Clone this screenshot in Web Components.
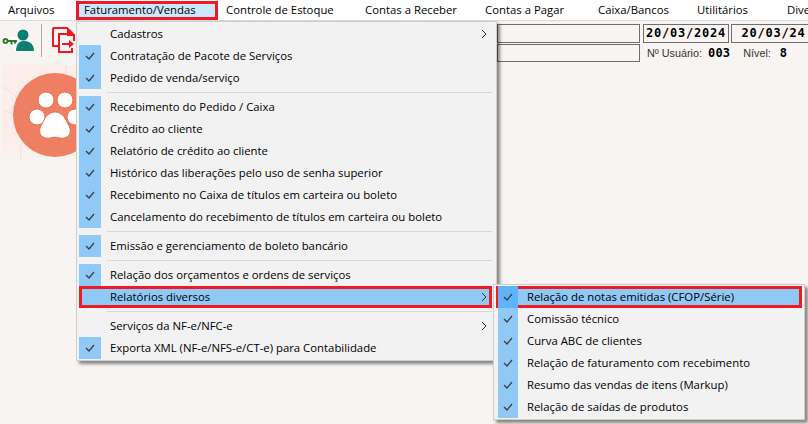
<!DOCTYPE html>
<html lang="pt-BR">
<head>
<meta charset="utf-8">
<style>
  html, body { margin: 0; padding: 0; height: 100%; overflow: hidden; background: #f7f4f1; }
  body { font: 11.35px "Open Sans", sans-serif; color: #000; width: 808px; height: 424px; position: relative; }
</style>
</head>
<body>
<erp-menubar>
  <span>Arquivos</span><span class="x">Faturamento/Vendas</span><span>Controle de Estoque</span><span>Contas a Receber</span><span>Contas a Pagar</span><span>Caixa/Bancos</span><span>Utilitários</span><span>Diversos</span>
</erp-menubar>
<erp-toolbar></erp-toolbar>
<erp-menu id="m1"></erp-menu>
<erp-menu id="m2"></erp-menu>

<script>
const menuBarTemplate = document.createElement('template');
menuBarTemplate.innerHTML = `
  <style>
    :host { display: block; height: 20px; background: #fff; border-bottom: 1px solid #d9d9d9; overflow: hidden; }
    .bar { display: grid; grid-template-columns: 76px 142px 139px 120px 113px 99px 90px 60px; height: 20px; white-space: nowrap; }
    ::slotted(span) { padding: 2px 0 0 8px; line-height: 15px; }
    ::slotted(.x) { background: #cce8ff; box-shadow: inset 0 0 0 3px #ed1c24; margin-top: 1px; height: 19px; padding-top: 1px; box-sizing: border-box; }
  </style>
  <div class="bar"><slot></slot></div>
`;
class ErpMenubar extends HTMLElement {
  constructor() {
    super();
    this.attachShadow({ mode: 'open' });
    this.shadowRoot.appendChild(menuBarTemplate.content.cloneNode(true));
  }
}
customElements.define('erp-menubar', ErpMenubar);

const toolbarTemplate = document.createElement('template');
toolbarTemplate.innerHTML = `
  <style>
    :host { display: grid; grid-template-columns: 497px 1fr; height: 403px; }
    .left { display: flex; flex-direction: column; }
    .icons { display: flex; align-items: flex-start; height: 44px; padding: 3px 0 0 2px; box-sizing: border-box; }
    .sep { width: 1px; height: 33px; margin: 0 0 0 7px; background: #a9a9a9; }
    .red { margin: 3px 0 0 10px; }
    .logo { display: block; margin-left: 2px; }
    .fields { display: grid; grid-template-columns: 143px 85px 85px; grid-template-rows: 19px 18px; column-gap: 3px; row-gap: 1px; padding-top: 3px; width: 311px; overflow: hidden; align-content: start; }
    .fields > :nth-child(2) { margin-right: -1px; }
    .box { border: 1px solid #6e6e6e; box-sizing: border-box; }
    .date { font: bold 12px "DejaVu Sans Mono", monospace; letter-spacing: 0.8px; text-align: center; line-height: 17px; white-space: nowrap; }
    .user { grid-column: 2 / 4; display: flex; align-items: center; white-space: nowrap; font: 10.8px "Liberation Sans", sans-serif; color: #333; padding-left: 4px; }
    .user b { font: bold 12px "DejaVu Sans Mono", monospace; color: #000; letter-spacing: 0.2px; }
    .user b:first-of-type { margin: 0 13px 0 6px; }
    .user b:last-of-type { margin-left: 9px; }
  </style>
  <div class="left">
    <div class="icons">
      <svg width="32" height="30" viewBox="0 0 32 30" style="margin-top:3px">
        <path d="M20.500 2a6 6 0 0 1 6 6c0 2-1 3.500-2 4.500 5 1 8 4 8 9.500v1H12v-1c0-5 3-8.500 8-9.500-1-1-2-2.500-2-4.500a6 6 0 0 1 2.500-6z" fill="#fff"/>
        <circle cx="21" cy="8" r="5.500" fill="#0a7f72"/>
        <path d="M14 24c0-5.500 2.500-10 7-10s11 1 11 10z" fill="#0a7f72"/>
        <rect x="0" y="10" width="15" height="9" rx="2" fill="#fff"/>
        <circle cx="3.500" cy="14" r="2" fill="none" stroke="#2d7f2d" stroke-width="2"/>
        <path d="M6 14h9M9.500 14.500v3M13 14.500v2" stroke="#2d7f2d" stroke-width="2" fill="none"/>
      </svg>
      <div class="sep"></div>
      <svg class="red" width="24" height="28" viewBox="0 0 24 28">
        <path d="M6 19H1V2a1 1 0 0 1 1-1h13l7 7v6" fill="none" stroke="#f01820" stroke-width="2"/>
        <path d="M15 1l8 8h-8z" fill="#f01820"/>
        <path d="M15 7H7v18h13v-4" fill="none" stroke="#f01820" stroke-width="2"/>
        <path d="M10 16h7v-3l5 4-5 4v-3h-7z" fill="#f01820"/>
      </svg>
    </div>
    <svg class="logo" width="75" height="96" viewBox="0 0 75 96">
      <defs><linearGradient id="fade" x1="0" y1="0" x2="0" y2="1"><stop offset="0.800" stop-color="#fdeeea"/><stop offset="1" stop-color="#f7f4f1"/></linearGradient></defs>
      <rect width="75" height="96" fill="url(#fade)"/>
      <path d="M0 22c5 2 10 5 14 10M0 45c8 2 15 6 20 12M64 0c1 3 0 6-1 10M22 72c-3 8-4 14-3 24" fill="none" stroke="#efe0dc"/>
      <circle cx="53" cy="50" r="42" fill="#ee7f63"/>
      <g fill="#fff" stroke="#e96f52">
        <circle cx="44" cy="35" r="8"/><circle cx="63" cy="35" r="8"/>
        <circle cx="35" cy="52" r="8"/><circle cx="73" cy="52" r="8"/>
        <path d="M53 47c-6 0-10 5-12 10-2 4-4 6-3 11 1 4 6 6 10 5 3-1 7-1 10 0 4 1 9-1 10-5 1-5-1-7-3-11-2-5-6-10-12-10z"/>
      </g>
    </svg>
  </div>
  <div class="fields">
    <div class="box"></div>
    <div class="box date">20/03/2024</div>
    <div class="box date">20/03/24</div>
    <div class="box"></div>
    <div class="user">Nº Usuário: <b>003</b> Nível: <b>8</b></div>
  </div>
`;
class ErpToolbar extends HTMLElement {
  constructor() {
    super();
    this.attachShadow({ mode: 'open' });
    this.shadowRoot.appendChild(toolbarTemplate.content.cloneNode(true));
  }
}
customElements.define('erp-toolbar', ErpToolbar);

const menuTemplate = document.createElement('template');
menuTemplate.innerHTML = `
  <style>
    :host { display: block; position: absolute; box-sizing: border-box; background: #f2f2f2; border: 1px solid #cfcfcf; padding: 1px var(--pad-right, 2px) 1px 2px; box-shadow: 3px 3px 3px rgba(0,0,0,.45); }
    .row { display: flex; align-items: center; height: 22px; position: relative; white-space: nowrap; }
    .row span { position: relative; top: -1px; }
    .chk { width: var(--chk, 22px); margin-left: var(--chk-left, 0); height: 22px; flex: none; display: flex; align-items: center; justify-content: center; margin-right: 9px; }
    .chk.on { background: #90c8f6; }
    .row.hi { background: #90c8f6; }
    .row.hi .chk.on { background: #5fb3f8; }
    .row.box { box-shadow: inset 0 0 0 3px #ed1c24; }
    .arrow { position: absolute; right: 5px; top: 6px; }
    .sep { height: 1px; background: #d7d7d7; margin: 3px 0 3px 28px; }
  </style>
  <div id="list"></div>
`;
const check = '<svg width="10" height="8" viewBox="0 0 10 8"><path d="M1 4l3 3 5-6" fill="none" stroke="#3a3f45" stroke-width="1.300"/></svg>';
const chevron = '<svg class="arrow" width="6" height="10" viewBox="0 0 6 10"><path d="M1 1l4 4-4 4" fill="none" stroke="#333" stroke-width="1"/></svg>';
class ErpMenu extends HTMLElement {
  constructor() {
    super();
    this.attachShadow({ mode: 'open' });
    this.shadowRoot.appendChild(menuTemplate.content.cloneNode(true));
  }
  set items(list) {
    const host = this.shadowRoot.getElementById('list');
    host.innerHTML = list.map(it => {
      if (it === '-') return '<div class="sep"></div>';
      const cls = 'row' + (it.hi ? ' hi' : '') + (it.box ? ' box' : '');
      return `<div class="${cls}"><div class="chk${it.c ? ' on' : ''}">${it.c ? check : ''}</div><span>${it.t}</span>${it.sub ? chevron : ''}</div>`;
    }).join('');
  }
}
customElements.define('erp-menu', ErpMenu);

const m1 = document.getElementById('m1');
m1.style.cssText = 'left:76px;top:21px;width:421px;--pad-right:4px;';
m1.items = [
  { t: 'Cadastros', sub: 1 },
  { t: 'Contratação de Pacote de Serviços', c: 1 },
  { t: 'Pedido de venda/serviço', c: 1 },
  '-',
  { t: 'Recebimento do Pedido / Caixa', c: 1 },
  { t: 'Crédito ao cliente', c: 1 },
  { t: 'Relatório de crédito ao cliente', c: 1 },
  { t: 'Histórico das liberações pelo uso de senha superior', c: 1 },
  { t: 'Recebimento no Caixa de títulos em carteira ou boleto', c: 1 },
  { t: 'Cancelamento do recebimento de títulos em carteira ou boleto', c: 1 },
  '-',
  { t: 'Emissão e gerenciamento de boleto bancário', c: 1 },
  '-',
  { t: 'Relação dos orçamentos e ordens de serviços', c: 1 },
  { t: 'Relatórios diversos', sub: 1, hi: 1, box: 1 },
  '-',
  { t: 'Serviços da NF-e/NFC-e', sub: 1 },
  { t: 'Exporta XML (NF-e/NFS-e/CT-e) para Contabilidade', c: 1 }
];
const m2 = document.getElementById('m2');
m2.style.cssText = 'left:493px;top:284px;width:312px;--chk:20px;--chk-left:2px;';
m2.items = [
  { t: 'Relação de notas emitidas (CFOP/Série)', c: 1, hi: 1, box: 1 },
  { t: 'Comissão técnico', c: 1 },
  { t: 'Curva ABC de clientes', c: 1 },
  { t: 'Relação de faturamento com recebimento', c: 1 },
  { t: 'Resumo das vendas de itens (Markup)', c: 1 },
  { t: 'Relação de saídas de produtos', c: 1 }
];
</script>
</body>
</html>
